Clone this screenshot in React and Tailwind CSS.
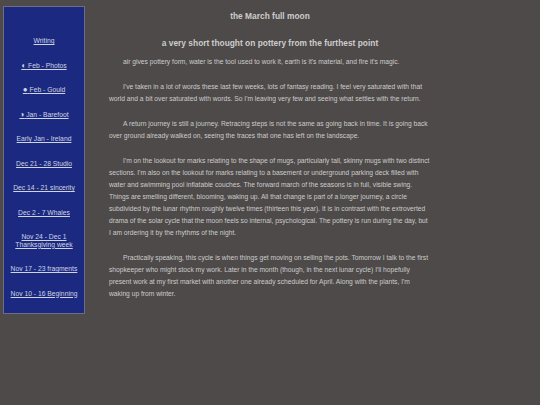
const links = [
  ['Writing'],
  ['◐', 'Feb - Photos'],
  ['●', 'Feb - Gould'],
  ['◑', 'Jan - Barefoot'],
  ['Early Jan - Ireland'],
  ['Dec 21 - 28 Studio'],
  ['Dec 14 - 21 sincerity'],
  ['Dec 2 - 7 Whales'],
  ['Nov 24 - Dec 1', 'Thanksgiving week', true],
  ['Nov 17 - 23 fragments'],
  ['Nov 10 - 16 Beginning'],
]

const paragraphs = [
  "I've taken in a lot of words these last few weeks, lots of fantasy reading. I feel very saturated with that world and a bit over saturated with words. So I'm leaving very few and seeing what settles with the return.",
  'A return journey is still a journey. Retracing steps is not the same as going back in time. It is going back over ground already walked on, seeing the traces that one has left on the landscape.',
  "I'm on the lookout for marks relating to the shape of mugs, particularly tall, skinny mugs with two distinct sections. I'm also on the lookout for marks relating to a basement or underground parking deck filled with water and swimming pool inflatable couches. The forward march of the seasons is in full, visible swing. Things are smelling different, blooming, waking up. All that change is part of a longer journey, a circle subdivided by the lunar rhythm roughly twelve times (thirteen this year). It is in contrast with the extroverted drama of the solar cycle that the moon feels so internal, psychological. The pottery is run during the day, but I am ordering it by the rhythms of the night.",
  "Practically speaking, this cycle is when things get moving on selling the pots. Tomorrow I talk to the first shopkeeper who might stock my work. Later in the month (though, in the next lunar cycle) I'll hopefully present work at my first market with another one already scheduled for April. Along with the plants, I'm waking up from winter.",
]

function NavLink({ item }) {
  const [a, b, twoLines] = item
  if (twoLines) {
    return (
      <a href="#" className="underline text-[#d0d3e2]">
        {a}
        <br />
        {b}
      </a>
    )
  }
  if (b) {
    return (
      <a href="#" className="underline text-[#d0d3e2]">
        <span className="text-[8px]">{a}</span> {b}
      </a>
    )
  }
  return (
    <a href="#" className="underline text-[#d0d3e2]">
      {a}
    </a>
  )
}

export default function App() {
  return (
    <div
      className="min-h-[405px] bg-[#4e4a49] text-[#cccccc] grid grid-cols-[109px_322px_109px]"
      style={{ fontFamily: '"Liberation Sans", Arial, sans-serif' }}
    >
      <div className="pl-[3px] pt-[6px] pr-[24px]">
        <nav className="bg-[#1b2a80] border border-[#6d6c86] pt-[30px] pb-[16px] flex flex-col gap-[17px] items-center text-center text-[6.75px] leading-[7.5px]">
          {links.map((l) => (
            <NavLink key={l.join()} item={l} />
          ))}
        </nav>
      </div>
      <main>
        <h1 className="text-center font-bold text-[8.4px] leading-[10px] mt-[11px]">the March full moon</h1>
        <h2 className="text-center font-bold text-[8.4px] leading-[10px] mt-[17px]">
          a very short thought on pottery from the furthest point
        </h2>
        <p className="text-[6.7px] leading-[12px] indent-[14px] mt-[8px] mb-[13px]">
          air gives pottery form, water is the tool used to work it, earth is it's material, and fire it's magic.
        </p>
        {paragraphs.map((t, i) => (
          <p key={i} className="text-[6.7px] leading-[12px] indent-[14px] mb-[13px]">
            {t}
          </p>
        ))}
      </main>
      <div />
    </div>
  )
}
